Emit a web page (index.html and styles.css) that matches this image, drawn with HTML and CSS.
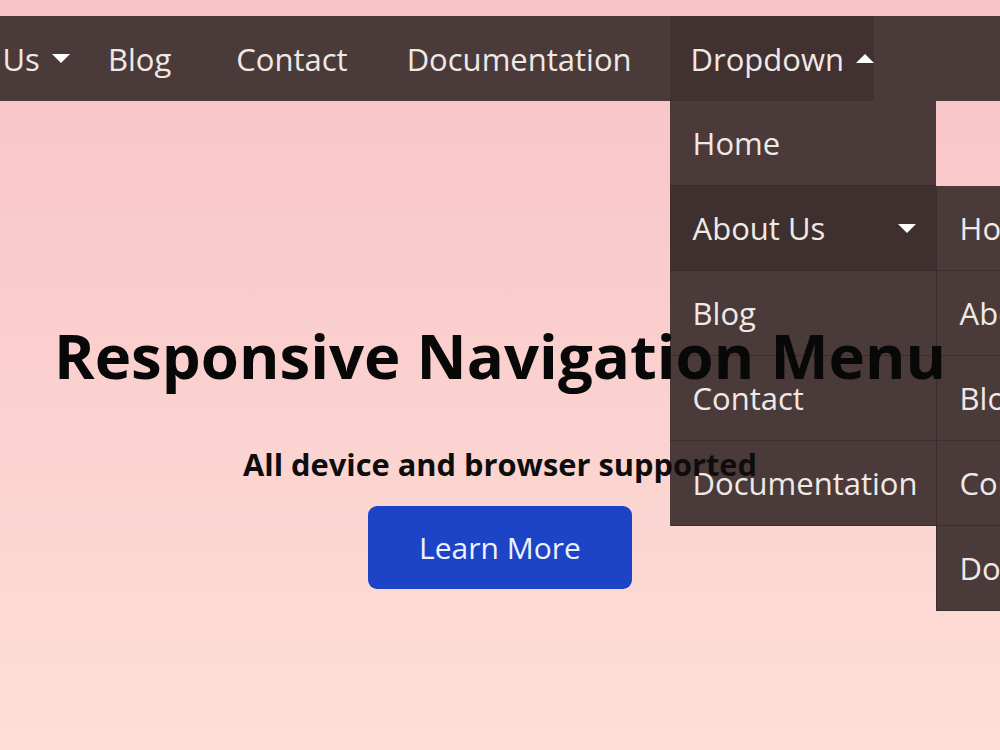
FILE: index.html
```html
<!DOCTYPE html>
<html lang="en">
<head>
<meta charset="utf-8">
<title>Responsive Navigation Menu</title>
<link rel="stylesheet" href="styles.css">
</head>
<body>
<header class="header">
  <nav class="navbar">
    <ul class="nav-list">
      <li class="nav-item"><a href="#">Home</a></li>
      <li class="nav-item has-caret"><a href="#">About Us <span class="caret down"></span></a></li>
      <li class="nav-item nav-blog"><a href="#">Blog</a></li>
      <li class="nav-item"><a href="#">Contact</a></li>
      <li class="nav-item"><a href="#">Documentation</a></li>
      <li class="nav-item has-caret is-open">
        <a href="#">Dropdown <span class="caret up"></span></a>
        <ul class="menu">
          <li class="menu-item"><a href="#">Home</a></li>
          <li class="menu-item is-active">
            <a href="#">About Us <span class="caret down"></span></a>
            <ul class="menu sub-menu">
              <li class="menu-item"><a href="#">Home</a></li>
              <li class="menu-item"><a href="#">About Us</a></li>
              <li class="menu-item"><a href="#">Blog</a></li>
              <li class="menu-item"><a href="#">Contact</a></li>
              <li class="menu-item"><a href="#">Documentation</a></li>
            </ul>
          </li>
          <li class="menu-item"><a href="#">Blog</a></li>
          <li class="menu-item"><a href="#">Contact</a></li>
          <li class="menu-item"><a href="#">Documentation</a></li>
        </ul>
      </li>
    </ul>
  </nav>
</header>
<main class="hero">
  <h1 class="hero-title">Responsive Navigation Menu</h1>
  <p class="hero-sub">All device and browser supported</p>
  <a class="hero-btn" href="#">Learn More</a>
</main>
</body>
</html>
```
FILE: styles.css
```css
* { box-sizing: border-box; }
html, body { height: 100%; }
body {
  margin: 0;
  font-family: "Open Sans", "Noto Sans", sans-serif;
  background: linear-gradient(to bottom, #f8c2c7 0%, #fbd3d0 60%, #fddfd5 100%);
  overflow: hidden;
}
a { text-decoration: none; color: inherit; }
ul { list-style: none; margin: 0; padding: 0; }

.header {
  padding-top: 16px;
  position: relative;
  z-index: 1;
}
.navbar {
  background: #4b3a3a;
  height: 85px;
}
.nav-list {
  display: flex;
  justify-content: flex-end;
  align-items: stretch;
  gap: 17px;
  height: 100%;
  padding-right: 126px;
}
.nav-item {
  position: relative;
  flex-shrink: 0;
  display: flex;
}
.nav-blog { margin-right: 6px; }
.nav-item > a {
  display: flex;
  align-items: center;
  padding: 0 21px;
  color: #efe9e6;
  font-size: 31px;
  white-space: nowrap;
}
.has-caret > a { padding-right: 0; }
.is-open > a { background: #413131; }

.caret {
  display: inline-block;
  width: 0;
  height: 0;
  margin-left: 12px;
  border-left: 9px solid transparent;
  border-right: 9px solid transparent;
}
.caret.down { border-top: 9px solid #ffffff; }
.caret.up { border-bottom: 9px solid #ffffff; }

.menu {
  position: absolute;
  top: 100%;
  left: 0;
  width: 266px;
  background: #4b3a3a;
}
.menu-item {
  position: relative;
  border-bottom: 1px solid #3c2e2e;
}
.menu-item > a {
  display: flex;
  align-items: center;
  justify-content: space-between;
  height: 84px;
  padding: 0 20px 0 23px;
  color: #efe9e6;
  font-size: 31px;
  white-space: nowrap;
}
.menu-item.is-active > a { background: #3f3030; }
.sub-menu {
  top: 0;
  left: 100%;
  border-left: 1px solid #3c2e2e;
}

.hero {
  position: relative;
  z-index: 2;
  display: flex;
  flex-direction: column;
  align-items: center;
  padding-top: 214px;
  pointer-events: none;
}
.hero-title {
  margin: 0;
  font-size: 61.7px;
  line-height: 80px;
  font-weight: 700;
  color: #080808;
  white-space: nowrap;
}
.hero-sub {
  margin: 49px 0 0;
  font-size: 30.8px;
  line-height: 40px;
  font-weight: 700;
  color: #0d0d0d;
}
.hero-btn {
  margin-top: 22px;
  width: 264px;
  height: 83px;
  display: flex;
  align-items: center;
  justify-content: center;
  background: #1d43c7;
  border-radius: 9px;
  color: #eef2ff;
  font-size: 30px;
}
```
